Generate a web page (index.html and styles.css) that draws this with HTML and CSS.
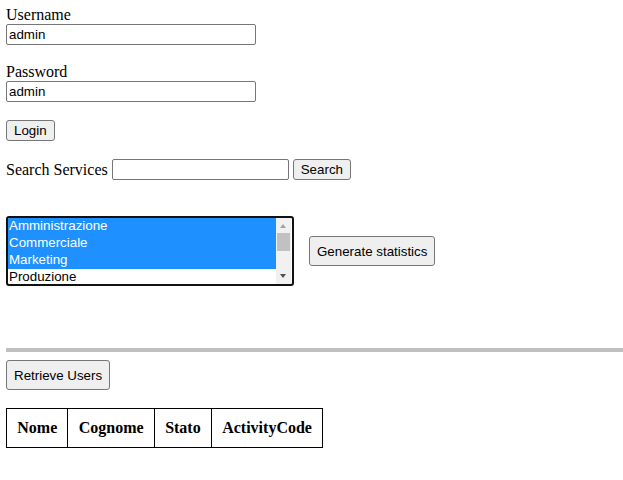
FILE: index.html
```html
<!DOCTYPE html>
<html lang="it">
<head>
<meta charset="utf-8">
<title>Gestione Servizi</title>
<link rel="stylesheet" href="styles.css">
</head>
<body>
<div class="page">
  <section class="login">
    <div class="field">
      <label class="label" for="user">Username</label>
      <input class="text-input wide" id="user" type="text" value="admin">
    </div>
    <div class="field">
      <label class="label" for="pass">Password</label>
      <input class="text-input wide" id="pass" type="text" value="admin">
    </div>
    <button class="btn small">Login</button>
  </section>

  <section class="search-row">
    <label class="label" for="search">Search Services</label>
    <input class="text-input search" id="search" type="text">
    <button class="btn small">Search</button>
  </section>

  <section class="stats-row">
    <div class="listbox">
      <div class="options">
        <div class="option selected">Amministrazione</div>
        <div class="option selected">Commerciale</div>
        <div class="option selected">Marketing</div>
        <div class="option">Produzione</div>
      </div>
      <div class="scrollbar">
        <div class="arrow up"></div>
        <div class="track"><div class="thumb"></div></div>
        <div class="arrow down"></div>
      </div>
    </div>
    <button class="btn large">Generate statistics</button>
  </section>

  <div class="rule"></div>

  <section class="users">
    <button class="btn large">Retrieve Users</button>
    <table class="users-table">
      <thead>
        <tr><th>Nome</th><th>Cognome</th><th>Stato</th><th>ActivityCode</th></tr>
      </thead>
    </table>
  </section>
</div>
</body>
</html>
```
FILE: styles.css
```css
html, body {
  margin: 0;
  padding: 0;
  background: #fff;
  overflow: hidden;
}
.page {
  padding: 6px 0 0 6px;
  font-family: "Liberation Serif", "Times New Roman", serif;
  font-size: 16px;
  color: #000;
}
.label {
  display: block;
  line-height: 18px;
  height: 18px;
}
.login {
  display: flex;
  flex-direction: column;
  align-items: flex-start;
  gap: 18px;
}
.field {
  display: flex;
  flex-direction: column;
  align-items: flex-start;
}
.text-input {
  box-sizing: border-box;
  height: 21px;
  margin: 0;
  padding: 1px 2px;
  border: 1px solid #767676;
  border-radius: 2px;
  font-family: "Liberation Sans", Arial, sans-serif;
  font-size: 13.33px;
  color: #000;
  background: #fff;
  outline: none;
}
.wide { width: 250px; }
.search { width: 177px; }
.btn {
  box-sizing: border-box;
  margin: 0;
  border: 1px solid #767676;
  border-radius: 3px;
  background: #efefef;
  font-family: "Liberation Sans", Arial, sans-serif;
  font-size: 13.33px;
  color: #000;
}
.btn.small {
  height: 21px;
  padding: 0 7px;
}
.btn.large {
  height: 30px;
  padding: 0 7px;
}
.search-row {
  display: flex;
  align-items: center;
  gap: 4px;
  margin-top: 18px;
  height: 21px;
}
.stats-row {
  display: flex;
  align-items: center;
  gap: 15px;
  margin-top: 36px;
}
.listbox {
  box-sizing: border-box;
  width: 288px;
  height: 70px;
  border: 2px solid #111;
  border-radius: 3px;
  display: flex;
  overflow: hidden;
  background: #fff;
}
.options {
  flex: 1;
  font-family: "Liberation Sans", Arial, sans-serif;
  font-size: 13.33px;
}
.option {
  height: 17px;
  line-height: 15px;
  padding-left: 1px;
  color: #000;
  white-space: nowrap;
}
.option.selected {
  background: #1e90ff;
  color: #fff;
}
.scrollbar {
  width: 15px;
  margin-right: 1px;
  background: #f1f1f1;
  display: flex;
  flex-direction: column;
}
.arrow {
  height: 15px;
  position: relative;
}
.arrow::after {
  content: "";
  position: absolute;
  left: 4px;
  width: 0;
  height: 0;
  border-left: 3.5px solid transparent;
  border-right: 3.5px solid transparent;
}
.arrow.up::after {
  top: 6px;
  border-bottom: 4px solid #a3a3a3;
}
.arrow.down::after {
  top: 5px;
  border-top: 4px solid #505050;
}
.track {
  flex: 1;
  padding: 0 1px;
}
.thumb {
  height: 18px;
  background: #c1c1c1;
}
.rule {
  margin-top: 62px;
  height: 4px;
  background: #c0c0c0;
  width: 100%;
}
.users {
  display: flex;
  flex-direction: column;
  align-items: flex-start;
  gap: 18px;
  margin-top: 8px;
}
.users-table {
  border-collapse: collapse;
  border: 1px solid #000;
}
.users-table th {
  border: 1px solid #000;
  padding: 10px 10.25px;
  font-weight: bold;
  font-size: 16px;
  line-height: 18px;
  font-family: "Liberation Serif", "Times New Roman", serif;
}
```
